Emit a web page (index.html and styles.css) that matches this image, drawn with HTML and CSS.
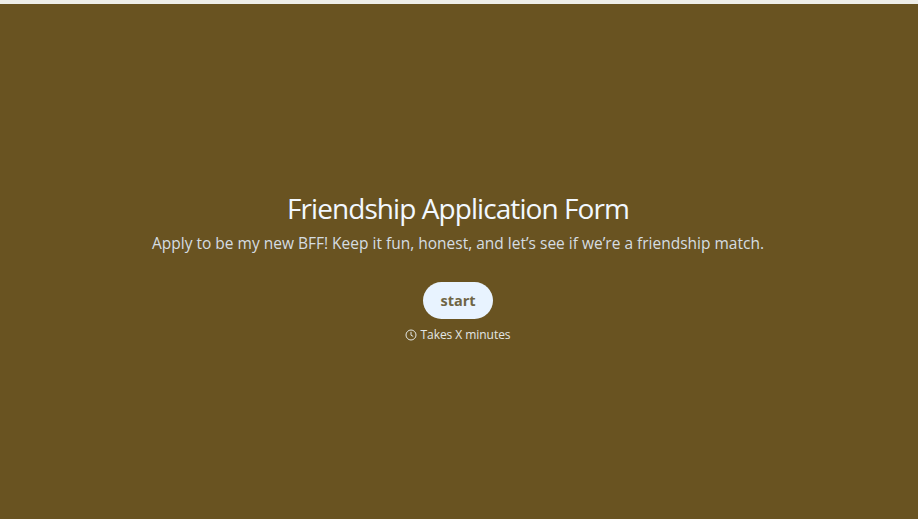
FILE: index.html
```html
<!DOCTYPE html>
<html lang="en">
<head>
  <meta charset="UTF-8" />
  <title>Friendship Application Form</title>
  <link rel="stylesheet" href="styles.css">
</head>
<body>
  <main class="welcome">
    <h1>Friendship Application Form</h1>
    <p class="description">Apply to be my new BFF! Keep it fun, honest, and let’s see if we’re a friendship match.</p>
    <button class="btn-start">start</button>
    <div class="duration">
      <svg class="clock" viewBox="0 0 12 12" width="12" height="12" aria-hidden="true">
        <circle cx="6" cy="6" r="5" fill="none" stroke="currentColor" stroke-width="1"/>
        <path d="M6 2.8V6.2L8.2 7.4" fill="none" stroke="currentColor" stroke-width="1"/>
      </svg>
      <span>Takes X minutes</span>
    </div>
  </main>
</body>
</html>
```

FILE: styles.css
```css
html, body {
  height: 100%;
}

body {
  margin: 0;
  background-color: #eeeee8;
  font-family: "Open Sans", "Noto Sans", Arial, sans-serif;
}

.welcome {
  box-sizing: border-box;
  height: 515px;
  margin-top: 4px;
  padding: 185px 2px 0 0;
  background-color: #695321;
  display: flex;
  flex-direction: column;
  align-items: center;
}

.welcome h1 {
  margin: 0;
  font-size: 28px;
  font-weight: 400;
  line-height: 38px;
  letter-spacing: -0.93px;
  color: #f2f8ff;
}

.description {
  margin: 5px 0 0;
  font-size: 15.5px;
  line-height: 22px;
  color: #d5dde2;
}

.btn-start {
  margin-top: 28px;
  width: 70px;
  height: 37px;
  padding: 0;
  border: none;
  border-radius: 18.5px;
  background-color: #e8f3ff;
  color: #6f6544;
  font-family: inherit;
  font-size: 14.5px;
  font-weight: 700;
  cursor: pointer;
}

.duration {
  margin-top: 7px;
  display: flex;
  align-items: center;
  gap: 3px;
  font-size: 12px;
  line-height: 18px;
  letter-spacing: -0.05px;
  color: #e3e6e4;
}
```
